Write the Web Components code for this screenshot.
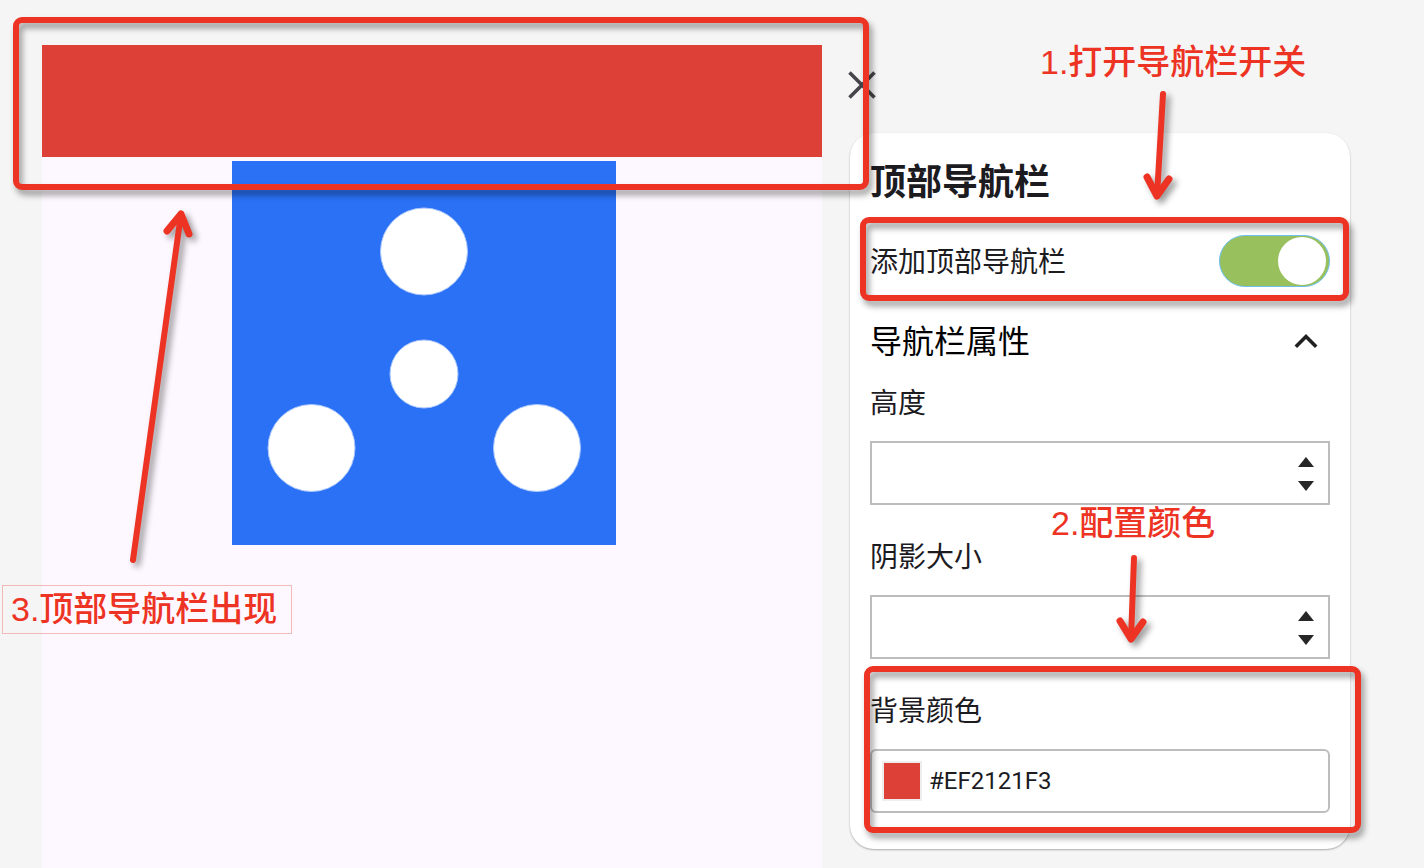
<!DOCTYPE html>
<html lang="zh-CN">
<head>
<meta charset="utf-8">
<title>顶部导航栏</title>
<style>
  body {
    margin: 0;
    background: #f5f5f5;
    color: #1c1b1f;
    font-family: Roboto, "Noto Sans CJK SC", sans-serif;
  }
</style>
</head>
<body>
<editor-page>
  <phone-preview slot="preview">
    <highlight-frame style="--inset: -28px -47px -33px -29px"><nav-preview></nav-preview></highlight-frame>
    <dice-picture></dice-picture>
    <guide-arrow style="--x: 80px; --y: 155px" width="80" height="370" shaft="M11 360L59 14" head="M45 31L59 14L67 34"></guide-arrow>
    <guide-note boxed style="--x: -40px; --y: 540px">3.顶部导航栏出现</guide-note>
  </phone-preview>
  <property-panel slot="panel" heading="顶部导航栏">
    <highlight-frame style="--inset: -18px 1px -14px 10px; --pad: 20px"><switch-row label="添加顶部导航栏"></switch-row></highlight-frame>
    <property-group heading="导航栏属性">
      <number-field label="高度"></number-field>
      <number-field label="阴影大小"></number-field>
      <highlight-frame style="--inset: -25px -11px -20px 14px; --pad: 20px"><color-field label="背景颜色" value="#EF2121F3"></color-field></highlight-frame>
    </property-group>
    <guide-note slot="guide" style="--x: 190px; --y: 39px">1.打开导航栏开关</guide-note>
    <guide-arrow slot="guide" style="--x: 280px; --y: 80px" width="60" height="130" shaft="M33 14L27 116" head="M17 97L27 116L39 99"></guide-arrow>
    <guide-note slot="guide" style="--x: 201px; --y: 500px">2.配置颜色</guide-note>
    <guide-arrow slot="guide" style="--x: 250px; --y: 540px" width="60" height="120" shaft="M34 18L31 99" head="M20 81L31 99L43 82"></guide-arrow>
  </property-panel>
</editor-page>

<script>
const define = (name, html, setup) => {
  const template = document.createElement('template');
  template.innerHTML = html;
  customElements.define(name, class extends HTMLElement {
    constructor() {
      super();
      this.attachShadow({ mode: 'open' }).append(template.content.cloneNode(true));
      if (setup) setup(this, selector => this.shadowRoot.querySelector(selector));
    }
  });
};

define('editor-page', `
  <style>
    :host { display: block; }
    main {
      display: grid;
      grid-template-columns: minmax(0, 780fr) minmax(0, 500fr);
      column-gap: 28px;
      min-height: 100vh;
      box-sizing: border-box;
      padding: 0 74px 0 42px;
    }
    ::slotted([slot="preview"]) { margin-top: 45px; }
  </style>
  <main><slot name="preview"></slot><slot name="panel"></slot></main>`);

define('phone-preview', `
  <style>
    :host { display: flex; flex-direction: column; gap: 4px; position: relative; background: #fdf8ff; }
  </style>
  <slot></slot>`);

define('nav-preview', `
  <style>:host { display: block; height: 112px; background: #dd4037; }</style>`);

define('dice-picture', `
  <style>
    :host { display: block; padding-left: 190px; }
    svg { display: block; width: 384px; max-width: 100%; }
  </style>
  <svg viewBox="0 0 384 384" role="img" aria-label="骰子">
    <rect width="384" height="384" fill="#2a71f5"/>
    <g fill="#fff" stroke="#a9c6fb">
      <circle cx="192" cy="90.500" r="43.500"/>
      <circle cx="192" cy="213" r="34"/>
      <circle cx="79.500" cy="287" r="43.500"/>
      <circle cx="305" cy="287" r="43.500"/>
    </g>
  </svg>`);

/* Red outline drawn round whatever is slotted in. */
define('highlight-frame', `
  <style>
    :host { display: block; position: relative; }
    .content { padding: 0 var(--pad, 0px); }
    .frame {
      position: absolute;
      inset: var(--inset);
      z-index: 2;
      border: 6px solid #ed3323;
      border-radius: 9px;
      pointer-events: none;
      filter: drop-shadow(3px 5px 3px rgba(0, 0, 0, .4));
    }
  </style>
  <div class="content"><slot></slot></div>
  <div class="frame"></div>`);

define('guide-note', `
  <style>
    :host {
      position: absolute;
      left: var(--x);
      top: var(--y);
      z-index: 3;
      color: #ed3323;
      font: 500 34px/47px "Liberation Sans", "Noto Sans CJK SC", sans-serif;
      white-space: nowrap;
    }
    :host([boxed]) { border: 1px solid #f3b9b8; padding: 0 14px 0 8px; }
  </style>
  <slot></slot>`);

define('guide-arrow', `
  <style>
    :host { position: absolute; left: var(--x); top: var(--y); z-index: 3; pointer-events: none; }
    svg { display: block; overflow: visible; filter: drop-shadow(4px 4px 3px rgba(0, 0, 0, .4)); }
  </style>
  <svg aria-hidden="true">
    <g fill="none" stroke="#ed3323" stroke-linecap="round" stroke-linejoin="round">
      <path class="shaft" stroke-width="6"/><path class="head" stroke-width="7"/>
    </g>
  </svg>`,
  (host, $) => {
    $('svg').setAttribute('width', host.getAttribute('width'));
    $('svg').setAttribute('height', host.getAttribute('height'));
    $('.shaft').setAttribute('d', host.getAttribute('shaft'));
    $('.head').setAttribute('d', host.getAttribute('head'));
  });

define('property-panel', `
  <style>
    :host { display: block; position: relative; padding: 73px 0 19px; }
    .close {
      display: flex; justify-content: center; align-items: center;
      width: 24px; height: 24px; padding: 0; border: 0; background: none; color: #46454b;
    }
    .close svg { flex: none; }
    section {
      margin-top: 36px;
      padding: 28px 0 36px;
      border-radius: 24px;
      background: #fff;
      box-shadow: 0 1px 2px rgba(0, 0, 0, .3);
    }
    h1 { margin: 0 20px 30px; font-size: 36px; line-height: 44px; font-weight: 700; }
  </style>
  <button class="close" aria-label="关闭">
    <svg width="28" height="28" viewBox="0 0 28 28"><path d="M1.500 1.500L26.500 26.500M26.500 1.500L1.500 26.500" stroke="currentColor" stroke-width="3.600"/></svg>
  </button>
  <section><h1></h1><slot></slot></section>
  <slot name="guide"></slot>`,
  (host, $) => { $('h1').textContent = host.getAttribute('heading'); });

define('switch-row', `
  <style>
    :host { display: flex; align-items: flex-end; justify-content: space-between; height: 52px; }
    label { font-size: 28px; line-height: 48px; }
    input {
      appearance: none;
      display: flex; align-items: center;
      width: 111px; height: 52px; margin: 0; padding: 0 3px;
      box-sizing: border-box;
      border: 1px solid #6dbff0; border-radius: 26px;
      background: #bdbdbd;
    }
    input::before { content: ""; width: 48px; height: 48px; border-radius: 50%; background: #fff; }
    input:checked { background: #98c05d; justify-content: flex-end; }
  </style>
  <label for="toggle"></label>
  <input id="toggle" type="checkbox" role="switch" checked>`,
  (host, $) => { $('label').textContent = host.getAttribute('label'); });

define('property-group', `
  <style>
    :host { display: block; margin-top: 31px; }
    h2 { margin: 0 20px 17px; font-weight: 400; }
    button {
      display: flex; align-items: center; justify-content: space-between;
      width: 100%; height: 48px; padding: 0 12px 0 0; border: 0; background: none;
      color: #000; font: inherit; font-size: 32px; line-height: 48px; text-align: left;
    }
    .fields { display: flex; flex-direction: column; gap: 32px; }
    ::slotted(number-field) { margin: 0 20px; }
  </style>
  <h2><button aria-expanded="true"><span></span>
    <svg width="24" height="16" viewBox="0 0 24 16" aria-hidden="true"><path d="M1.800 12.800L12 2.600L22.200 12.800" fill="none" stroke="#202020" stroke-width="3.600"/></svg>
  </button></h2>
  <div class="fields"><slot></slot></div>`,
  (host, $) => { $('span').textContent = host.getAttribute('heading'); });

const fieldStyle = `
    :host { display: flex; flex-direction: column; gap: 16px; }
    label { font-size: 28px; line-height: 42px; }
    .box {
      display: flex; align-items: center; height: 64px; box-sizing: border-box;
      border: 2px solid #bdbdbd; background: #fff;
    }
    input {
      flex: 1; min-width: 0; height: 40px; padding: 0; border: 0; outline: 0; background: none;
      color: inherit; font: inherit; font-size: 24px;
    }`;

define('number-field', `
  <style>${fieldStyle}
    input { appearance: textfield; padding-left: 12px; }
    input::-webkit-inner-spin-button { appearance: none; }
    .steps { display: flex; flex-direction: column; width: 44px; padding-top: 2px; }
    button {
      display: flex; align-items: center; justify-content: center;
      height: 24px; padding: 0; border: 0; background: none;
    }
  </style>
  <label for="value"></label>
  <div class="box">
    <input id="value" type="number">
    <div class="steps">
      <button aria-label="增加"><svg width="16" height="10"><path d="M8 0L16 10H0Z" fill="#262626"/></svg></button>
      <button aria-label="减少"><svg width="16" height="10"><path d="M0 0H16L8 10Z" fill="#262626"/></svg></button>
    </div>
  </div>`,
  (host, $) => { $('label').textContent = host.getAttribute('label'); });

define('color-field', `
  <style>${fieldStyle}
    .box { border-radius: 6px; gap: 7px; padding: 0 10px; }
    .swatch { width: 40px; height: 40px; box-sizing: border-box; border: 2px solid #eee; background: #dd4037; }
  </style>
  <label for="value"></label>
  <div class="box"><span class="swatch"></span><input id="value" type="text"></div>`,
  (host, $) => {
    $('label').textContent = host.getAttribute('label');
    $('input').value = host.getAttribute('value');
  });
</script>
</body>
</html>
